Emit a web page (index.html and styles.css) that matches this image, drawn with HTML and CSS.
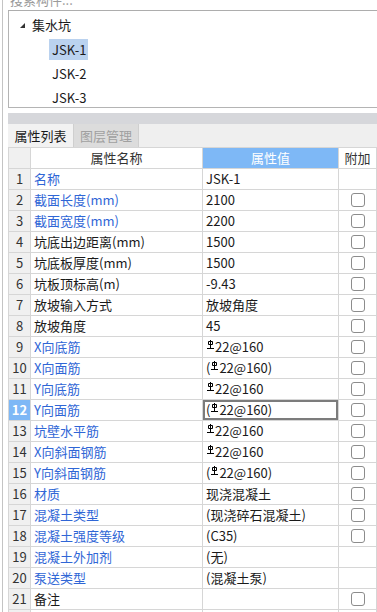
FILE: index.html
```html
<!DOCTYPE html>
<html lang="zh-CN">
<head>
  <meta charset="UTF-8" />
  <meta name="viewport" content="width=device-width, initial-scale=1.0"/>
  <title>属性列表</title>
  <link rel="stylesheet" href="styles.css">
</head>
<body>
  <div class="app">
    <div class="search"><span class="search-text">搜索构件...</span></div>

    <div class="tree">
      <div class="tree-root">
        <svg class="caret" width="5" height="5" viewBox="0 0 5 5"><polygon points="5,0 5,5 0,5" fill="#333"/></svg>
        <span>集水坑</span>
      </div>
      <div class="tree-item selected">JSK-1</div>
      <div class="tree-item">JSK-2</div>
      <div class="tree-item">JSK-3</div>
    </div>

    <div class="panel-bar"></div>

    <div class="tabs">
      <div class="tab active">属性列表</div>
      <div class="tab">图层管理</div>
    </div>

    <div class="grid">
      <div class="cell head num"></div>
      <div class="cell head">属性名称</div>
      <div class="cell head value-head">属性值</div>
      <div class="cell head">附加</div>

      <div class="cell num">1</div><div class="cell name blue">名称</div><div class="cell val">JSK-1</div><div class="cell extra"></div>
      <div class="cell num">2</div><div class="cell name blue">截面长度(mm)</div><div class="cell val">2100</div><div class="cell extra"><span class="check"></span></div>
      <div class="cell num">3</div><div class="cell name blue">截面宽度(mm)</div><div class="cell val">2200</div><div class="cell extra"><span class="check"></span></div>
      <div class="cell num">4</div><div class="cell name">坑底出边距离(mm)</div><div class="cell val">1500</div><div class="cell extra"><span class="check"></span></div>
      <div class="cell num">5</div><div class="cell name">坑底板厚度(mm)</div><div class="cell val">1500</div><div class="cell extra"><span class="check"></span></div>
      <div class="cell num">6</div><div class="cell name">坑板顶标高(m)</div><div class="cell val">-9.43</div><div class="cell extra"><span class="check"></span></div>
      <div class="cell num">7</div><div class="cell name">放坡输入方式</div><div class="cell val">放坡角度</div><div class="cell extra"><span class="check"></span></div>
      <div class="cell num">8</div><div class="cell name">放坡角度</div><div class="cell val">45</div><div class="cell extra"><span class="check"></span></div>
      <div class="cell num">9</div><div class="cell name blue">X向底筋</div><div class="cell val"><svg class="bar" width="7" height="9" viewBox="0 0 7 9"><path d="M3.5 0V8M1.5 1.5h4v3h-4zM0 8.5h7" stroke="#000" fill="none"/></svg>22@160</div><div class="cell extra"><span class="check"></span></div>
      <div class="cell num">10</div><div class="cell name blue">X向面筋</div><div class="cell val">(<svg class="bar" width="7" height="9" viewBox="0 0 7 9"><path d="M3.5 0V8M1.5 1.5h4v3h-4zM0 8.5h7" stroke="#000" fill="none"/></svg>22@160)</div><div class="cell extra"><span class="check"></span></div>
      <div class="cell num">11</div><div class="cell name blue">Y向底筋</div><div class="cell val"><svg class="bar" width="7" height="9" viewBox="0 0 7 9"><path d="M3.5 0V8M1.5 1.5h4v3h-4zM0 8.5h7" stroke="#000" fill="none"/></svg>22@160</div><div class="cell extra"><span class="check"></span></div>
      <div class="cell num current">12</div><div class="cell name blue">Y向面筋</div><div class="cell val editing">(<svg class="bar" width="7" height="9" viewBox="0 0 7 9"><path d="M3.5 0V8M1.5 1.5h4v3h-4zM0 8.5h7" stroke="#000" fill="none"/></svg>22@160)</div><div class="cell extra"><span class="check"></span></div>
      <div class="cell num">13</div><div class="cell name blue">坑壁水平筋</div><div class="cell val"><svg class="bar" width="7" height="9" viewBox="0 0 7 9"><path d="M3.5 0V8M1.5 1.5h4v3h-4zM0 8.5h7" stroke="#000" fill="none"/></svg>22@160</div><div class="cell extra"><span class="check"></span></div>
      <div class="cell num">14</div><div class="cell name blue">X向斜面钢筋</div><div class="cell val"><svg class="bar" width="7" height="9" viewBox="0 0 7 9"><path d="M3.5 0V8M1.5 1.5h4v3h-4zM0 8.5h7" stroke="#000" fill="none"/></svg>22@160</div><div class="cell extra"><span class="check"></span></div>
      <div class="cell num">15</div><div class="cell name blue">Y向斜面钢筋</div><div class="cell val">(<svg class="bar" width="7" height="9" viewBox="0 0 7 9"><path d="M3.5 0V8M1.5 1.5h4v3h-4zM0 8.5h7" stroke="#000" fill="none"/></svg>22@160)</div><div class="cell extra"><span class="check"></span></div>
      <div class="cell num">16</div><div class="cell name blue">材质</div><div class="cell val">现浇混凝土</div><div class="cell extra"><span class="check"></span></div>
      <div class="cell num">17</div><div class="cell name blue">混凝土类型</div><div class="cell val">(现浇碎石混凝土)</div><div class="cell extra"><span class="check"></span></div>
      <div class="cell num">18</div><div class="cell name blue">混凝土强度等级</div><div class="cell val">(C35)</div><div class="cell extra"><span class="check"></span></div>
      <div class="cell num">19</div><div class="cell name blue">混凝土外加剂</div><div class="cell val">(无)</div><div class="cell extra"></div>
      <div class="cell num">20</div><div class="cell name blue">泵送类型</div><div class="cell val">(混凝土泵)</div><div class="cell extra"></div>
      <div class="cell num">21</div><div class="cell name">备注</div><div class="cell val"></div><div class="cell extra"><span class="check"></span></div>
      <div class="cell num"></div><div class="cell name"></div><div class="cell val"></div><div class="cell extra"></div>
    </div>
  </div>
</body>
</html>
```

FILE: styles.css
```css
:root {
  --line: #d6d6d6;
  --frame: #b4b4b4;
  --head-blue: #7eb8f6;
  --name-blue: #2f66d6;
  --num-bg: #f0f0f0;
  --text: #1a1a1a;
}

* {
  margin: 0;
  padding: 0;
  box-sizing: border-box;
}

body {
  font-family: "Noto Sans CJK SC", "DejaVu Sans", sans-serif;
  font-size: 13px;
  color: var(--text);
  background: #fff;
  width: 377px;
  height: 612px;
  overflow: hidden;
}

.app {
  margin-left: 2px;
  border-left: 1px solid #c4c4c4;
  padding-left: 5px;
  height: 612px;
  overflow: hidden;
}

/* search box, mostly scrolled off the top */
.search {
  height: 11px;
  border-bottom: 1px solid #adadad;
  overflow: hidden;
}

.search-text {
  display: block;
  margin-top: -7px;
  padding-left: 2px;
  line-height: 14px;
  color: #9a9a9a;
}

/* component tree */
.tree {
  height: 97px;
  border-left: 1px solid var(--frame);
  border-bottom: 1px solid var(--frame);
  padding-top: 2px;
  overflow: hidden;
}

.tree-root {
  display: flex;
  align-items: center;
  height: 22px;
  padding-left: 11px;
  margin-bottom: 4px;
}

.caret {
  margin-right: 7px;
  margin-top: 2px;
}

.tree-item {
  width: 39px;
  height: 21px;
  line-height: 21px;
  margin: 0 0 3px 40px;
  padding-left: 3px;
}

.tree-item.selected {
  background: #bad2ef;
}

.panel-bar {
  height: 11px;
  margin-top: 5px;
  background: #d6d7db;
}

/* tabs */
.tabs {
  display: flex;
  height: 23px;
  background: #efefef;
}

.tab {
  width: 65px;
  height: 23px;
  line-height: 23px;
  text-align: center;
  color: #a0a0a0;
  background: #dcdcdc;
  border-right: 1px solid #cfcfcf;
}

.tab.active {
  width: 66px;
  color: #1a1a1a;
  background: #f2f2f2;
}

/* property grid */
.grid {
  display: grid;
  grid-template-columns: 22px 172px 136px 38px;
  border-left: 1px solid var(--line);
  border-top: 1px solid var(--line);
}

.cell {
  height: 21px;
  line-height: 20px;
  border-right: 1px solid var(--line);
  border-bottom: 1px solid var(--line);
  white-space: nowrap;
  overflow: hidden;
}

.head {
  text-align: center;
  color: #333;
  background: #fff;
}

.head.num {
  background: var(--num-bg);
}

.value-head {
  background: var(--head-blue);
  color: #fff;
}

.num {
  background: var(--num-bg);
  text-align: center;
  color: #333;
}

.num.current {
  background: var(--head-blue);
  color: #fff;
  font-weight: bold;
}

.name {
  padding-left: 3px;
}

.name.blue {
  color: var(--name-blue);
}

.val {
  padding-left: 3px;
}

.val.editing {
  box-shadow: inset 0 0 0 2px #7c7c7c;
}

.bar {
  vertical-align: 3px;
  margin: 0 1px 0 1px;
}

.extra {
  display: flex;
  align-items: center;
  justify-content: center;
}

.check {
  width: 14px;
  height: 14px;
  border: 1px solid #8c8c8c;
  border-radius: 3px;
  background: #fff;
}
```
